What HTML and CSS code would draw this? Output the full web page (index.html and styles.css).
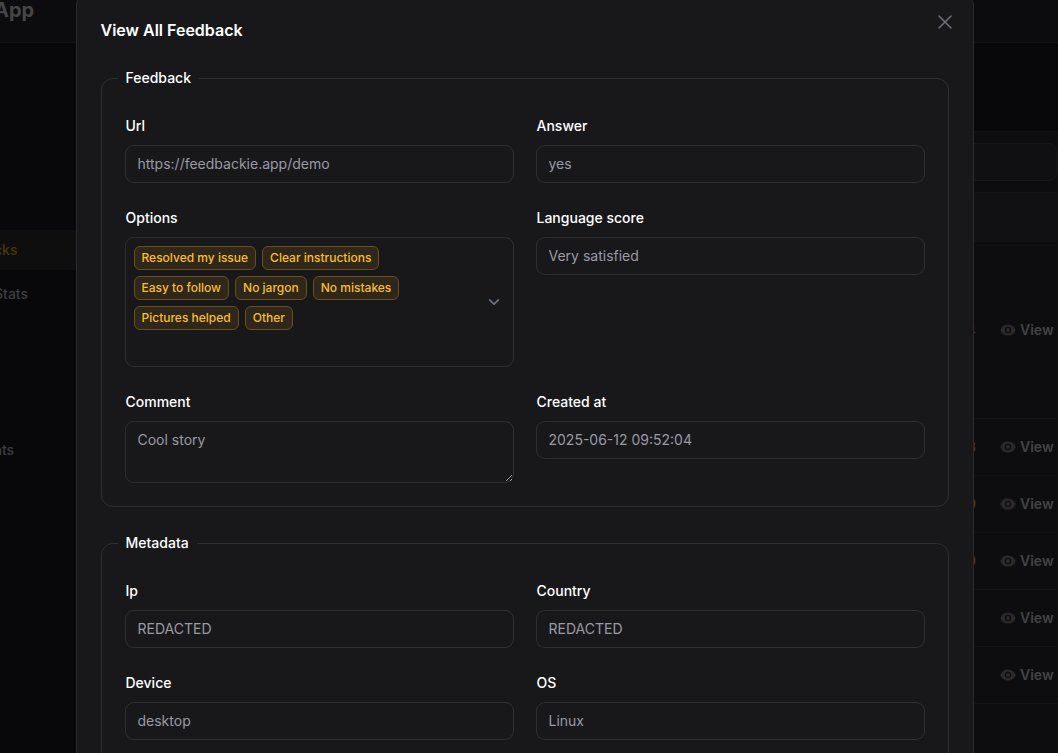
FILE: index.html
```html
<!DOCTYPE html>
<html lang="en">
<head>
    <meta charset="UTF-8">
    <meta name="viewport" content="width=device-width, initial-scale=1.0">
    <title>Feedbacks - App</title>
    <link rel="stylesheet" href="styles.css">
</head>
<body>
    <svg class="sprite" aria-hidden="true">
        <symbol id="eye" viewBox="0 0 20 20">
            <path d="M10 12.5a2.5 2.5 0 1 0 0-5 2.5 2.5 0 0 0 0 5Z"/>
            <path fill-rule="evenodd" d="M.664 10.59a1.651 1.651 0 0 1 0-1.186A10.004 10.004 0 0 1 10 3c4.257 0 7.893 2.66 9.336 6.41.147.381.146.804 0 1.186A10.004 10.004 0 0 1 10 17c-4.257 0-7.893-2.66-9.336-6.41ZM14 10a4 4 0 1 1-8 0 4 4 0 0 1 8 0Z" clip-rule="evenodd"/>
        </symbol>
    </svg>

    <!-- Page behind the modal -->
    <div class="page">
        <header class="topbar">
            <a href="#" class="brand">App</a>
        </header>

        <div class="layout">
            <nav class="sidebar">
                <a href="#" class="active">cks</a>
                <a href="#">Stats</a>
                <a href="#" class="group-start">ats</a>
            </nav>

            <main class="table-card">
                <div class="toolbar">
                    <input type="search" aria-label="Search">
                </div>
                <table>
                    <thead>
                        <tr><th></th><th></th></tr>
                    </thead>
                    <tbody>
                        <tr class="tall">
                            <td class="score">4</td>
                            <td class="action"><a href="#"><svg><use href="#eye"/></svg>View</a></td>
                        </tr>
                        <tr>
                            <td class="score">3</td>
                            <td class="action"><a href="#"><svg><use href="#eye"/></svg>View</a></td>
                        </tr>
                        <tr>
                            <td class="score high">9</td>
                            <td class="action"><a href="#"><svg><use href="#eye"/></svg>View</a></td>
                        </tr>
                        <tr>
                            <td class="score">0</td>
                            <td class="action"><a href="#"><svg><use href="#eye"/></svg>View</a></td>
                        </tr>
                        <tr>
                            <td class="score"></td>
                            <td class="action"><a href="#"><svg><use href="#eye"/></svg>View</a></td>
                        </tr>
                        <tr>
                            <td class="score"></td>
                            <td class="action"><a href="#"><svg><use href="#eye"/></svg>View</a></td>
                        </tr>
                    </tbody>
                </table>
            </main>
        </div>
    </div>

    <div class="overlay">
        <div class="modal" role="dialog" aria-modal="true" aria-labelledby="modal-title">
            <button type="button" class="close" aria-label="Close">
                <svg viewBox="0 0 24 24"><path d="M6 18 18 6M6 6l12 12"/></svg>
            </button>
            <h2 id="modal-title">View All Feedback</h2>

            <form>
                <fieldset>
                    <legend>Feedback</legend>
                    <div class="fields">
                        <div class="field">
                            <label for="url">Url</label>
                            <input type="text" id="url" value="https://feedbackie.app/demo" disabled>
                        </div>
                        <div class="field">
                            <label for="answer">Answer</label>
                            <input type="text" id="answer" value="yes" disabled>
                        </div>
                        <div class="field">
                            <label for="options">Options</label>
                            <div class="multi-select">
                                <select id="options" disabled>
                                    <option></option>
                                </select>
                                <ul class="badges">
                                    <li>Resolved my issue</li>
                                    <li>Clear instructions</li>
                                    <li>Easy to follow</li>
                                    <li>No jargon</li>
                                    <li>No mistakes</li>
                                    <li>Pictures helped</li>
                                    <li>Other</li>
                                </ul>
                            </div>
                        </div>
                        <div class="field">
                            <label for="language-score">Language score</label>
                            <input type="text" id="language-score" value="Very satisfied" disabled>
                        </div>
                        <div class="field">
                            <label for="comment">Comment</label>
                            <textarea id="comment" disabled>Cool story</textarea>
                        </div>
                        <div class="field">
                            <label for="created-at">Created at</label>
                            <input type="text" id="created-at" value="2025-06-12 09:52:04" disabled>
                        </div>
                    </div>
                </fieldset>

                <fieldset>
                    <legend>Metadata</legend>
                    <div class="fields">
                        <div class="field">
                            <label for="ip">Ip</label>
                            <input type="text" id="ip" value="REDACTED" disabled>
                        </div>
                        <div class="field">
                            <label for="country">Country</label>
                            <input type="text" id="country" value="REDACTED" disabled>
                        </div>
                        <div class="field">
                            <label for="device">Device</label>
                            <input type="text" id="device" value="desktop" disabled>
                        </div>
                        <div class="field">
                            <label for="os">OS</label>
                            <input type="text" id="os" value="Linux" disabled>
                        </div>
                    </div>
                </fieldset>
            </form>
        </div>
    </div>
</body>
</html>
```
FILE: styles.css
```css
* {
    box-sizing: border-box;
}

body {
    margin: 0;
    background: #08080a;
    color: #fff;
    font-family: Inter, "Liberation Sans", sans-serif;
    font-size: 14px;
    line-height: 24px;
    overflow: hidden;
}

a {
    color: inherit;
    text-decoration: none;
}

.sprite {
    display: none;
}

/* Page behind the modal */
.page {
    display: flex;
    flex-direction: column;
    height: 100vh;
    overflow: hidden;
}

.topbar {
    flex: none;
    height: 43px;
    background: #0c0c0e;
    border-bottom: 1px solid #121214;
}

.brand {
    display: block;
    margin: -2px 0 0 -6px;
    color: #464646;
    font-size: 20px;
    font-weight: 700;
}

.layout {
    display: flex;
    flex: 1;
}

.sidebar {
    display: flex;
    flex-direction: column;
    gap: 4px;
    flex: none;
    width: 96px;
    margin-left: -6px;
    padding-top: 187px;
    color: #3e3e42;
    font-weight: 500;
}

.sidebar a {
    padding: 8px 0;
}

.sidebar .active {
    background: #0e0e0e;
    color: #4b3810;
}

.sidebar .group-start {
    margin-top: 112px;
}

.table-card {
    flex: 1;
    margin-top: 88px;
    margin-right: -12px;
    background: #0d0d0f;
    border-top: 1px solid #121214;
}

.toolbar {
    padding: 11px 13px 11px 600px;
}

.toolbar input {
    display: block;
    width: 100%;
    height: 38px;
    background: #101012;
    border: 1px solid #171719;
    border-radius: 8px;
}

table {
    width: 100%;
    border-collapse: collapse;
}

th {
    height: 49px;
    background: #111113;
    border-top: 1px solid #141416;
    border-bottom: 1px solid #141416;
}

td {
    height: 57px;
    padding: 0;
    border-bottom: 1px solid #131315;
}

.tall td {
    height: 177px;
}

.score {
    color: #46382c;
    font-weight: 500;
    text-align: right;
}

.score.high {
    color: #4b3810;
}

.action {
    width: 94px;
    padding-left: 24px;
}

.action a {
    display: flex;
    align-items: center;
    gap: 4px;
    color: #434345;
    font-weight: 600;
}

.action svg {
    width: 16px;
    height: 16px;
    fill: #2a2a2c;
}

/* Modal */
.overlay {
    position: fixed;
    inset: 0;
    padding: 0 84px 0 75px;
    overflow: hidden;
}

.modal {
    position: relative;
    max-width: 898px;
    margin: -7px auto 0;
    padding: 24px;
    background: #18181b;
    border: 1px solid #2a2a2d;
    border-radius: 12px;
}

.modal h2 {
    margin: 0 0 24px;
    font-size: 16px;
    font-weight: 600;
}

.close {
    position: absolute;
    top: 16px;
    right: 16px;
    width: 24px;
    height: 24px;
    padding: 0;
    background: none;
    border: none;
    cursor: pointer;
}

.close svg {
    display: block;
    fill: none;
    stroke: #71717a;
    stroke-width: 1.5;
    stroke-linecap: round;
    stroke-linejoin: round;
}

form {
    display: grid;
    gap: 24px;
}

fieldset {
    min-width: 0;
    margin: 0;
    padding: 24px;
    border: 1px solid #2f2f32;
    border-radius: 12px;
}

legend {
    margin-left: -8px;
    padding: 0 8px;
    font-weight: 500;
}

.fields {
    display: grid;
    grid-template-columns: 1fr 1fr;
    gap: 24px;
}

.field {
    display: grid;
    gap: 8px;
    align-content: start;
    min-width: 0;
}

.field label {
    font-weight: 500;
}

.field input,
.field textarea,
.field select {
    display: block;
    width: 100%;
    height: 36px;
    margin: 0;
    padding: 5px 12px 7px;
    background: transparent;
    border: none;
    border-radius: 8px;
    box-shadow: 0 0 0 1px #2f2f32;
    color: #9a9aa3;
    font: inherit;
    opacity: 1;
}

.field textarea {
    height: 60px;
    padding: 6px 12px;
    resize: vertical;
}

.multi-select {
    display: grid;
}

.multi-select select,
.badges {
    grid-area: 1 / 1;
}

.multi-select select {
    height: 128px;
    appearance: none;
    background: url("data:image/svg+xml,%3Csvg xmlns='http://www.w3.org/2000/svg' fill='none' viewBox='0 0 20 20'%3E%3Cpath stroke='%236b7280' stroke-linecap='round' stroke-linejoin='round' stroke-width='1.5' d='m6 8 4 4 4-4'/%3E%3C/svg%3E") no-repeat right 8px center / 22px;
}

.badges {
    display: flex;
    flex-wrap: wrap;
    align-content: flex-start;
    gap: 6px;
    margin: 0;
    padding: 8px 40px 8px 8px;
    list-style: none;
    pointer-events: none;
}

.badges li {
    padding: 3px 7px;
    background: #2f271c;
    border: 1px solid #6a4f16;
    border-radius: 6px;
    color: #fbbf24;
    font-size: 12px;
    font-weight: 500;
    line-height: 16px;
}
```
